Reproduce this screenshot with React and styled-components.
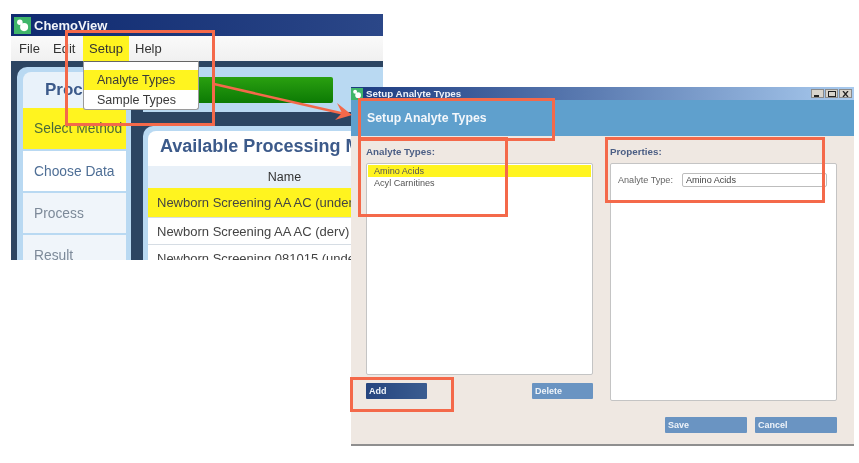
import React from 'react';
import styled, { createGlobalStyle } from 'styled-components';

const GlobalStyle = createGlobalStyle`
  html, body {
    margin: 0;
    padding: 0;
    background: #ffffff;
    font-family: "Liberation Sans", Arial, sans-serif;
    overflow: hidden;
  }
`;

const Canvas = styled.div`
  position: relative;
  width: 859px;
  height: 463px;
  background: #ffffff;
  overflow: hidden;
`;

// back window
const MainWindow = styled.div`
  position: absolute;
  left: 11px;
  top: 14px;
  width: 372px;
  height: 246px;
  display: flex;
  flex-direction: column;
  overflow: hidden;
  background: #2c4562;
  filter: blur(0.6px);
`;

const MainTitleBar = styled.div`
  height: 22px;
  flex: none;
  display: flex;
  align-items: center;
  gap: 3px;
  padding-left: 3px;
  background: linear-gradient(90deg, #0f2a70, #2b4788);
  color: #f2f5fa;
  font-size: 13px;
  font-weight: bold;
`;

const AppIcon = styled.svg`
  flex: none;
  display: block;
`;

const MenuBar = styled.div`
  height: 25px;
  flex: none;
  display: flex;
  background: linear-gradient(#fafafa, #f0f0f0);
  font-size: 13px;
  color: #333;
  padding-left: 2px;
`;

const MenuItem = styled.div`
  padding: 0 6px;
  width: ${p => p.$w}px;
  box-sizing: border-box;
  display: flex;
  align-items: center;
  background: ${p => (p.$active ? '#fff41f' : 'transparent')};
`;

const MainBody = styled.div`
  flex: 1;
  display: flex;
  gap: 12px;
  padding: 6px 0 0 6px;
  min-height: 0;
`;

const SidePanel = styled.div`
  width: 114px;
  flex: none;
  height: 240px;
  box-sizing: border-box;
  background: #b9d9f2;
  border-radius: 10px 0 0 0;
  padding: 5px 5px 0 6px;
`;

const SideHeader = styled.div`
  height: 36px;
  background: #e9f2fa;
  border-radius: 8px 0 0 0;
  color: #3c5a8a;
  font-size: 17px;
  font-weight: bold;
  display: flex;
  align-items: center;
  padding-left: 22px;
`;

const SideItem = styled.div`
  height: ${p => p.$h || 40}px;
  margin-bottom: 2px;
  display: flex;
  align-items: center;
  padding-left: 11px;
  font-size: 13.8px;
  white-space: nowrap;
  overflow: hidden;
  color: ${p => p.$color};
  background: ${p => p.$bg};
`;

const MainColumn = styled.div`
  flex: 1;
  display: flex;
  flex-direction: column;
  min-width: 0;
  gap: 14px;
`;

const ProgressPanel = styled.div`
  height: 45px;
  flex: none;
  box-sizing: border-box;
  padding: 10px 50px 9px 0;
  background: #b9d9f2;
`;

const ProgressBar = styled.div`
  height: 100%;
  border-radius: 2px;
  background: linear-gradient(#2aa010, #0c7a04);
`;

const MethodsPanel = styled.div`
  flex: 1;
  background: #b9d9f2;
  border-radius: 10px 0 0 0;
  padding: 5px 0 0 5px;
`;

const MethodsTitle = styled.div`
  height: 30px;
  padding-bottom: 5px;
  display: flex;
  align-items: center;
  padding-left: 12px;
  background: #ffffff;
  border-radius: 8px 0 0 0;
  color: #3c5a8a;
  font-size: 18px;
  font-weight: bold;
  white-space: nowrap;
`;

const TableHead = styled.div`
  height: 22px;
  display: flex;
  align-items: center;
  justify-content: center;
  padding-left: 38px;
  background: #e8f0f8;
  font-size: 12.5px;
  color: #333;
`;

const TableRow = styled.div`
  height: ${p => p.$h}px;
  display: flex;
  align-items: center;
  padding-left: 9px;
  font-size: 13px;
  white-space: nowrap;
  color: #444;
  background: ${p => (p.$active ? '#fff41f' : '#ffffff')};
  border-bottom: 1px solid #d6dde4;
`;

const DropMenu = styled.div`
  position: absolute;
  left: 83px;
  top: 61px;
  width: 116px;
  height: 49px;
  box-sizing: border-box;
  padding-top: 8px;
  background: #ffffff;
  border: 1px solid #9a9a9a;
  border-top-color: #666;
  border-radius: 0 0 3px 3px;
  font-size: 12.5px;
  color: #3a3a3a;
  filter: blur(0.5px);
`;

const DropItem = styled.div`
  height: 20px;
  display: flex;
  align-items: center;
  padding-left: 13px;
  background: ${p => (p.$active ? '#fff41f' : 'transparent')};
`;

// dialog in front
const Dialog = styled.div`
  position: absolute;
  left: 351px;
  top: 87px;
  width: 503px;
  height: 359px;
  box-sizing: border-box;
  display: flex;
  flex-direction: column;
  background: #efe8e2;
  border-bottom: 2px solid #8f8f8f;
  filter: blur(0.6px);
`;

const DialogTitleBar = styled.div`
  height: 13px;
  flex: none;
  display: flex;
  align-items: center;
  gap: 3px;
  padding: 0 2px 0 0;
  background: linear-gradient(90deg, #1b3a80 0%, #5f7fb4 50%, #a9cbef 100%);
  color: #eef2f8;
  font-size: 9.8px;
  font-weight: bold;
`;

const WindowButtons = styled.div`
  margin-left: auto;
  display: flex;
  gap: 1px;
`;

const WindowButton = styled.div`
  width: 13px;
  height: 9px;
  display: flex;
  align-items: center;
  justify-content: center;
  background: #d8d4cc;
  border: 1px solid #8a8a8a;
  box-sizing: border-box;
`;

const DialogHeader = styled.div`
  height: 36px;
  flex: none;
  display: flex;
  align-items: center;
  padding-left: 16px;
  background: #5fa0cd;
  color: #f3f7fb;
  font-size: 12.3px;
  font-weight: bold;
`;

const DialogBody = styled.div`
  flex: 1;
  display: grid;
  grid-template-columns: 227px 227px;
  grid-template-rows: auto auto;
  align-content: start;
  column-gap: 17px;
  padding: 10px 0 0 15px;
`;

const Column = styled.div`
  display: flex;
  flex-direction: column;
`;

const SectionLabel = styled.div`
  height: 17px;
  box-sizing: border-box;
  padding-bottom: 6px;
  font-size: 9.8px;
  font-weight: bold;
  color: #4c5f85;
  display: flex;
  align-items: center;
`;

const ListBox = styled.div`
  height: ${p => p.$h}px;
  box-sizing: border-box;
  padding: 1px;
  background: #ffffff;
  border: 1px solid #c4c4c4;
  border-radius: 2px;
`;

const ListRow = styled.div`
  height: 12px;
  display: flex;
  align-items: center;
  padding-left: 6px;
  font-size: 9.1px;
  color: #555;
  background: ${p => (p.$active ? '#fff41f' : 'transparent')};
`;

const ButtonRow = styled.div`
  display: flex;
  justify-content: space-between;
  margin-top: 8px;
`;

const Button = styled.div`
  width: ${p => p.$w}px;
  height: 16px;
  box-sizing: border-box;
  display: flex;
  align-items: center;
  padding-left: 3px;
  border-radius: 1px;
  color: #eef3f9;
  font-size: 9px;
  font-weight: bold;
  background: ${p => (p.$dark ? 'linear-gradient(90deg, #26457f, #3a5c90)' : '#6a94c2')};
`;

const PropertyRow = styled.div`
  display: flex;
  align-items: center;
  gap: 9px;
  padding: 8px 0 0 6px;
  font-size: 9.1px;
  color: #666;
`;

const TextField = styled.div`
  width: 145px;
  height: 14px;
  box-sizing: border-box;
  display: flex;
  align-items: center;
  padding-left: 3px;
  color: #444;
  border: 1px solid #bdbdbd;
  border-radius: 2px;
`;

const DialogFooter = styled.div`
  grid-column: 1 / -1;
  display: flex;
  justify-content: flex-end;
  gap: 8px;
  margin-top: 16px;
`;

// red annotations over the screenshots
const Callout = styled.div`
  position: absolute;
  left: ${p => p.$x}px;
  top: ${p => p.$y}px;
  width: ${p => p.$w}px;
  height: ${p => p.$h}px;
  box-sizing: border-box;
  border: 3.5px solid #f4694a;
`;

const ArrowLayer = styled.svg`
  position: absolute;
  left: 0;
  top: 0;
  pointer-events: none;
`;

const Logo = ({ size }) => (
  <AppIcon width={size} height={size} viewBox="0 0 16 16">
    <rect width="16" height="16" fill="#3fb56a" />
    <circle cx="5.5" cy="5" r="2.6" fill="#ffffff" />
    <circle cx="9.5" cy="9.5" r="3.8" fill="#ffffff" />
  </AppIcon>
);

const App = () => (
  <Canvas>
    <GlobalStyle />
    <MainWindow>
      <MainTitleBar>
        <Logo size={17} />
        ChemoView
      </MainTitleBar>
      <MenuBar>
        <MenuItem $w={34}>File</MenuItem>
        <MenuItem $w={36}>Edit</MenuItem>
        <MenuItem $w={46} $active>Setup</MenuItem>
        <MenuItem $w={44}>Help</MenuItem>
      </MenuBar>
      <MainBody>
        <SidePanel>
          <SideHeader>Process</SideHeader>
          <SideItem $bg="#fff41f" $color="#4a6a3a" $h={41}>Select Method</SideItem>
          <SideItem $bg="#ffffff" $color="#4f6f96">Choose Data</SideItem>
          <SideItem $bg="#f0f5fa" $color="#7d8a99">Process</SideItem>
          <SideItem $bg="#f0f5fa" $color="#7d8a99">Result</SideItem>
        </SidePanel>
        <MainColumn>
          <ProgressPanel>
            <ProgressBar />
          </ProgressPanel>
          <MethodsPanel>
            <MethodsTitle>Available Processing M</MethodsTitle>
            <TableHead>Name</TableHead>
            <TableRow $h={29} $active>Newborn Screening AA AC (under</TableRow>
            <TableRow $h={26}>Newborn Screening AA AC (derv)</TableRow>
            <TableRow $h={26}>Newborn Screening 081015 (under</TableRow>
          </MethodsPanel>
        </MainColumn>
      </MainBody>
    </MainWindow>
    <DropMenu>
      <DropItem $active>Analyte Types</DropItem>
      <DropItem>Sample Types</DropItem>
    </DropMenu>
    <Dialog>
      <DialogTitleBar>
        <Logo size={12} />
        Setup Analyte Types
        <WindowButtons>
          <WindowButton>
            <svg width="7" height="6" viewBox="0 0 7 6"><rect x="0" y="4" width="5" height="2" fill="#222" /></svg>
          </WindowButton>
          <WindowButton>
            <svg width="8" height="6" viewBox="0 0 8 6"><rect x="0.5" y="0.5" width="7" height="5" fill="none" stroke="#222" /></svg>
          </WindowButton>
          <WindowButton>
            <svg width="7" height="6" viewBox="0 0 7 6"><path d="M1 0 L6 6 M6 0 L1 6" stroke="#222" strokeWidth="1.3" /></svg>
          </WindowButton>
        </WindowButtons>
      </DialogTitleBar>
      <DialogHeader>Setup Analyte Types</DialogHeader>
      <DialogBody>
        <Column>
          <SectionLabel>Analyte Types:</SectionLabel>
          <ListBox $h={212}>
            <ListRow $active>Amino Acids</ListRow>
            <ListRow>Acyl Carnitines</ListRow>
          </ListBox>
          <ButtonRow>
            <Button $w={61} $dark>Add</Button>
            <Button $w={61}>Delete</Button>
          </ButtonRow>
        </Column>
        <Column>
          <SectionLabel>Properties:</SectionLabel>
          <ListBox $h={238}>
            <PropertyRow>
              Analyte Type:
              <TextField>Amino Acids</TextField>
            </PropertyRow>
          </ListBox>
        </Column>
        <DialogFooter>
          <Button $w={82}>Save</Button>
          <Button $w={82}>Cancel</Button>
        </DialogFooter>
      </DialogBody>
    </Dialog>
    <Callout $x={65} $y={30} $w={150} $h={96} />
    <Callout $x={358} $y={98} $w={197} $h={43} />
    <Callout $x={358} $y={137} $w={150} $h={80} />
    <Callout $x={605} $y={137} $w={220} $h={66} />
    <Callout $x={350} $y={377} $w={104} $h={35} />
    <ArrowLayer width="859" height="463" viewBox="0 0 859 463">
      <line x1="214" y1="84" x2="345" y2="114" stroke="#f4694a" strokeWidth="2.5" />
      <polygon points="352,115 337,103 342,113 335,120" fill="#f4694a" />
    </ArrowLayer>
  </Canvas>
);

export default App;
